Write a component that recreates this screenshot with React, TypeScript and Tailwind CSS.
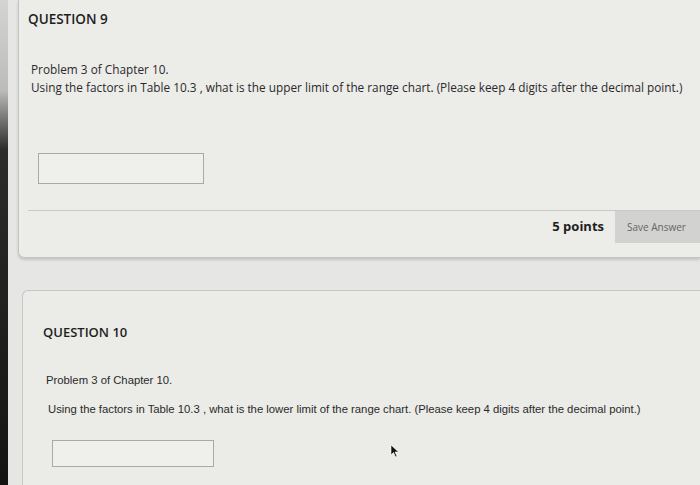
export default function App() {
  return (
    <div className="w-[700px] h-[485px] overflow-hidden flex bg-[#e6e6e4]" style={{ fontFamily: '"Open Sans", sans-serif' }}>
      <div className="w-[8px] shrink-0 bg-[linear-gradient(to_bottom,#d4d4d2_0px,#bcbcba_90px,#2c2c2c_150px,#141414_485px)]" />
      <div className="flex-1 flex flex-col">
        {/* question 9 */}
        <section className="ml-[10px] h-[258px] flex flex-col bg-[#ecece9] border-l border-b border-[#c4c4c2] rounded-bl-md shadow-[0_2px_3px_rgba(0,0,0,0.15)]">
          <h2 className="pl-[9px] pt-[10px] text-[13.5px] font-semibold text-[#1e1e1e] leading-[18px]">QUESTION 9</h2>
          <p className="pl-[12px] mt-[33px] text-[11.8px] text-[#2a2a2a] leading-[16px]">Problem 3 of Chapter 10.</p>
          <p className="pl-[12px] mt-[2px] text-[11.8px] text-[#2a2a2a] leading-[16px] whitespace-nowrap">
            Using the factors in Table 10.3 , what is the upper limit of the range chart. (Please keep 4 digits after the decimal point.)
          </p>
          <div className="ml-[19px] mt-[58px] w-[166px] h-[31px] border border-[#a9a9a7] bg-[#efefec]" />
          <div className="mt-auto ml-[9px] border-t border-[#c9c9c7] flex items-center justify-end gap-[11px] h-[33px] mb-[14px]">
            <span className="text-[13px] font-bold text-[#1e1e1e]">5 points</span>
            <button className="h-[32px] w-[85px] bg-[#d2d2d0] text-[10px] text-[#666] text-left pl-[12px]">Save Answer</button>
          </div>
        </section>

        {/* question 10 */}
        <section className="ml-[14px] mt-[32px] flex-1 flex flex-col bg-[#ebebe8] border-l border-t border-[#c6c6c4] rounded-tl-md relative">
          <h2 className="pl-[20px] pt-[32px] text-[13px] font-semibold text-[#1e1e1e] leading-[18px]">QUESTION 10</h2>
          <p className="pl-[23px] mt-[32px] text-[11.3px] text-[#2a2a2a] leading-[14px]" style={{ fontFamily: '"Liberation Sans", Arial, sans-serif' }}>
            Problem 3 of Chapter 10.
          </p>
          <p className="pl-[25px] mt-[15px] text-[11.3px] text-[#2a2a2a] leading-[14px] whitespace-nowrap" style={{ fontFamily: '"Liberation Sans", Arial, sans-serif' }}>
            Using the factors in Table 10.3 , what is the lower limit of the range chart. (Please keep 4 digits after the decimal point.)
          </p>
          <div className="ml-[29px] mt-[24px] w-[162px] h-[27px] border border-[#a9a9a7] bg-[#efefec]" />
          <svg className="absolute left-[367px] top-[153px]" width="10" height="14" viewBox="0 0 10 14">
            <path d="M1 1 L1 11 L3.5 8.5 L5.5 13 L7 12.3 L5 8 L8.5 8 Z" fill="#111" stroke="#fff" strokeWidth="0.6" />
          </svg>
        </section>
      </div>
    </div>
  );
}
